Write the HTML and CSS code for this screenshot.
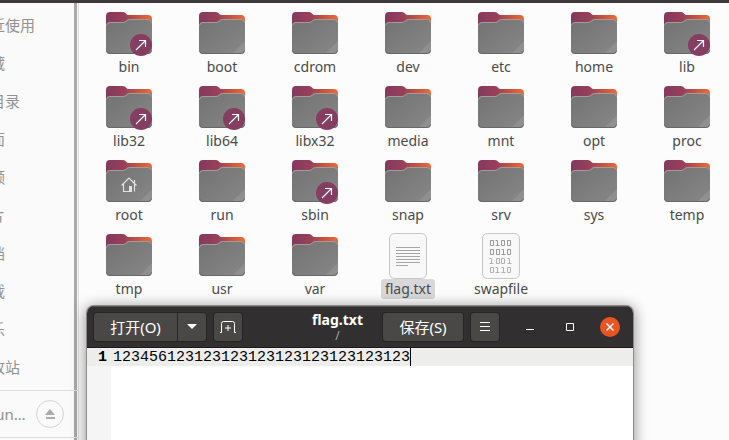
FILE: index.html
```html
<!DOCTYPE html>
<html lang="zh-CN">
<head>
<meta charset="utf-8">
<meta name="viewport" content="width=device-width, initial-scale=1">
<title>flag.txt</title>
<link rel="stylesheet" href="styles.css">
</head>
<body>
<svg class="defs" aria-hidden="true">
  <defs>
    <linearGradient id="back" x1="0" y1="0" x2="1" y2="0">
      <stop offset="0" stop-color="#83395f"/>
      <stop offset=".4" stop-color="#98405a"/>
      <stop offset=".7" stop-color="#c8543f"/>
      <stop offset="1" stop-color="#f06a35"/>
    </linearGradient>
    <linearGradient id="front" x1="0" y1="0" x2="1" y2="1">
      <stop offset="0" stop-color="#727272"/>
      <stop offset="1" stop-color="#878787"/>
    </linearGradient>
    <symbol id="folder" viewBox="0 0 46 48">
      <path d="M0 7q0-4 4-4h13q2 0 3 1.500t3 1.500h19q4 0 4 4v20h-46z" fill="url(#back)"/>
      <path d="M0 17q0-4 4-4h13q2 0 3-1.500t3-1.500h19q4 0 4 4v27q0 4-4 4h-38q-4 0-4-4z" fill="url(#front)"/>
      <path d="M46 32v9q0 4-4 4h-9z" fill="#fff" opacity=".09"/>
      <path d="M.5 16.500q.5-3 3.500-3h13q2 0 3.500-1.500t3-1.500h18.500q3 0 3.500 3" fill="none" stroke="#a19d9c"/>
      <path d="M.5 41.500q.5 3 3.500 3h38q3 0 3.500-3" fill="none" stroke="#686868"/>
    </symbol>
    <symbol id="linked" viewBox="0 0 46 48">
      <use href="#folder" width="46" height="48"/>
      <circle cx="35" cy="36" r="11" fill="#863d62"/>
      <path d="M30 41l9.500-9.500M33 31.500h6.500v6.500" fill="none" stroke="#fff" stroke-width="1.200"/>
    </symbol>
    <symbol id="home" viewBox="0 0 46 48">
      <use href="#folder" width="46" height="48"/>
      <path d="M15.500 28.500l7.500-7.500 7.500 7.500M17.500 27v7.500h6M28.500 27v7.500M28.500 26v-3" fill="none" stroke="#e2e2e2" stroke-width="1.200"/>
      <path d="M23 29h3v6h-3z" fill="#e2e2e2"/>
    </symbol>
    <symbol id="text" viewBox="0 0 46 48">
      <rect x="4.500" y="2.500" width="37" height="45" rx="5" fill="#f8f8f8" stroke="#c6c6c6"/>
      <path d="M11 16.500h24M11 19.500h24M11 22.500h24M11 25.500h24M11 28.500h24M11 31.500h24M11 34.500h12" stroke="#a5a5a5"/>
    </symbol>
    <symbol id="binary" viewBox="0 0 46 48">
      <rect x="4.500" y="2.500" width="37" height="45" rx="5" fill="#f8f8f8" stroke="#c6c6c6"/>
      <g fill="none" stroke="#999">
        <path d="M12.500 9.500h3v5h-3zM17.500 9.500h2v5m-2 0h4M23.500 9.500h3v5h-3zM29.500 9.500h3v5h-3z"/>
        <path d="M12.500 18.500h3v5h-3zM18.500 18.500h3v5h-3zM23.500 18.500h2v5m-2 0h4M29.500 18.500h3v5h-3z"/>
        <path stroke="#b2b2b2" d="M11.500 27.500h2v5m-2 0h4M18.500 27.500h3v5h-3zM23.500 27.500h3v5h-3zM29.500 27.500h2v5m-2 0h4"/>
        <path stroke="#b2b2b2" d="M12.500 36.500h3v5h-3zM17.500 36.500h2v5m-2 0h4M23.500 36.500h2v5m-2 0h4M29.500 36.500h3v5h-3z"/>
      </g>
    </symbol>
  </defs>
</svg>

<div class="files">
  <nav class="sidebar">
    <ul class="places">
      <li><a href="#">最近使用</a></li>
      <li><a href="#">收藏</a></li>
      <li><a href="#">主目录</a></li>
      <li><a href="#">桌面</a></li>
      <li><a href="#">视频</a></li>
      <li><a href="#">图片</a></li>
      <li><a href="#">文档</a></li>
      <li><a href="#">下载</a></li>
      <li><a href="#">音乐</a></li>
      <li><a href="#">回收站</a></li>
    </ul>
    <div class="device">
      <a href="#">Ubun…</a>
      <button class="eject" aria-label="弹出"><svg width="12" height="12"><path d="M6 1l5 6h-10zM2 9h9v2h-9z" fill="#aaa"/></svg></button>
    </div>
  </nav>
  <main class="grid">
    <a class="item" href="#"><svg><use href="#linked"/></svg><span>bin</span></a>
    <a class="item" href="#"><svg><use href="#folder"/></svg><span>boot</span></a>
    <a class="item" href="#"><svg><use href="#folder"/></svg><span>cdrom</span></a>
    <a class="item" href="#"><svg><use href="#folder"/></svg><span>dev</span></a>
    <a class="item" href="#"><svg><use href="#folder"/></svg><span>etc</span></a>
    <a class="item" href="#"><svg><use href="#folder"/></svg><span>home</span></a>
    <a class="item" href="#"><svg><use href="#linked"/></svg><span>lib</span></a>
    <a class="item" href="#"><svg><use href="#linked"/></svg><span>lib32</span></a>
    <a class="item" href="#"><svg><use href="#linked"/></svg><span>lib64</span></a>
    <a class="item" href="#"><svg><use href="#linked"/></svg><span>libx32</span></a>
    <a class="item" href="#"><svg><use href="#folder"/></svg><span>media</span></a>
    <a class="item" href="#"><svg><use href="#folder"/></svg><span>mnt</span></a>
    <a class="item" href="#"><svg><use href="#folder"/></svg><span>opt</span></a>
    <a class="item" href="#"><svg><use href="#folder"/></svg><span>proc</span></a>
    <a class="item" href="#"><svg><use href="#home"/></svg><span>root</span></a>
    <a class="item" href="#"><svg><use href="#folder"/></svg><span>run</span></a>
    <a class="item" href="#"><svg><use href="#linked"/></svg><span>sbin</span></a>
    <a class="item" href="#"><svg><use href="#folder"/></svg><span>snap</span></a>
    <a class="item" href="#"><svg><use href="#folder"/></svg><span>srv</span></a>
    <a class="item" href="#"><svg><use href="#folder"/></svg><span>sys</span></a>
    <a class="item" href="#"><svg><use href="#folder"/></svg><span>temp</span></a>
    <a class="item" href="#"><svg><use href="#folder"/></svg><span>tmp</span></a>
    <a class="item" href="#"><svg><use href="#folder"/></svg><span>usr</span></a>
    <a class="item" href="#"><svg><use href="#folder"/></svg><span>var</span></a>
    <a class="item selected" href="#"><svg><use href="#text"/></svg><span>flag.txt</span></a>
    <a class="item" href="#"><svg><use href="#binary"/></svg><span>swapfile</span></a>
  </main>
</div>

<section class="editor">
  <header class="bar">
    <div class="side">
      <div class="split">
        <button class="btn open">打开(O)</button>
        <button class="btn icon" aria-label="最近的文件"><svg width="10" height="6"><path d="M0 0h10l-5 5z" fill="#fff"/></svg></button>
      </div>
      <button class="btn icon" aria-label="新建"><svg width="16" height="12"><path d="M0 11.500h1.500v-9q0-2 2-2h9q2 0 2 2v9h1.500M8 4v6M5 7h6" fill="none" stroke="#fff"/></svg></button>
    </div>
    <h1 class="title">flag.txt<small>/</small></h1>
    <div class="side">
      <button class="btn save">保存(S)</button>
      <button class="btn icon" aria-label="菜单"><svg width="10" height="10"><path d="M0 .5h10M0 4.500h10M0 8.500h10" stroke="#fff"/></svg></button>
      <div class="controls">
        <button class="ctl" aria-label="最小化"><svg width="20" height="20"><path d="M6 12.500h8" stroke="#fff"/></svg></button>
        <button class="ctl" aria-label="最大化"><svg width="20" height="20"><path d="M6.500 6.500h7v7h-7z" fill="none" stroke="#fff"/></svg></button>
        <button class="ctl close" aria-label="关闭"><svg width="20" height="20"><path d="M6.500 6.500l7 7M13.500 6.500l-7 7" stroke="#fff" stroke-width="1.500"/></svg></button>
      </div>
    </div>
  </header>
  <div class="doc">
    <div class="line"><b class="num">1</b><code class="code">123456123123123123123123123123123</code></div>
  </div>
</section>
</body>
</html>
```

FILE: styles.css
```css
* { box-sizing: border-box; }

body {
  margin: 0;
  height: 100vh;
  overflow: hidden;
  position: relative;
  background: #fcfcfc;
  color: #4a4a4a;
  font: 15px/20px "Noto Sans", "Noto Sans CJK SC", sans-serif;
}

a { color: inherit; text-decoration: none; }
button { font: inherit; color: inherit; padding: 0; border: 0; cursor: pointer; }
svg { display: block; }
.defs { position: absolute; width: 0; height: 0; }

.files {
  display: flex;
  height: 100%;
  border-top: 3px solid #3c3a3b;
}

.sidebar {
  flex: none;
  width: 79px;
  overflow: hidden;
  background: linear-gradient(to left, #dedede 1px, #fafafa 1px 2px, #a9a9a9 2px 5px, #fafafa 5px);
  color: #929292;
}

.places {
  list-style: none;
  margin: 0 0 0 -25px;
  padding: 3px 0 0;
}

.places a { display: block; line-height: 38px; white-space: nowrap; }

.device {
  display: flex;
  align-items: center;
  justify-content: space-between;
  height: 48px;
  margin: 4px 0 0 -25px;
  padding-right: 15px;
  border: solid #dedede;
  border-width: 1px 0;
}

.eject {
  display: grid;
  place-items: center;
  width: 28px;
  height: 28px;
  border: 1px solid #d6d6d6;
  border-radius: 50%;
  background: none;
}

.grid {
  flex: 1;
  display: grid;
  grid-template-columns: repeat(auto-fill, 78px);
  align-content: start;
  gap: 6px 15px;
  padding: 6px 0 0 11px;
}

.item { display: flex; flex-direction: column; align-items: center; font-size: 14px; }
.item svg { width: 46px; height: 48px; }
.item span { padding: 0 4px; border-radius: 3px; }
.selected span { background: #d8d8d8; }

/* text editor window floating over the file manager */
.editor {
  position: absolute;
  top: 306px;
  right: 96px;
  bottom: -20px;
  left: 87px;
  display: flex;
  flex-direction: column;
  overflow: hidden;
  border-radius: 7px 7px 0 0;
  background: #fff;
  box-shadow: 0 0 0 1px #8b8b8b, 0 2px 14px 2px rgba(0, 0, 0, .4);
}

.bar {
  display: grid;
  grid-template-columns: auto 1fr auto;
  height: 42px;
  padding: 0 13px 0 7px;
  border-top: 1px solid #555253;
  border-bottom: 1px solid #1f181d;
  background: #322f30;
  color: #fff;
}

.side { display: flex; align-items: center; gap: 8px; }
.split { display: flex; gap: 1px; }

.btn {
  display: grid;
  place-items: center;
  height: 28px;
  border-radius: 3px;
  background: #4a4846;
  box-shadow: 0 0 0 1px #272526;
}

.icon { width: 28px; }
.open { width: 83px; }
.save { width: 80px; }
.split .open { border-radius: 3px 0 0 3px; }
.split .icon { border-radius: 0 3px 3px 0; }

.title {
  justify-self: end;
  margin: 0 20px 0 0;
  padding-top: 5px;
  font-size: 14px;
  line-height: 16px;
  text-align: center;
}

.title small { display: block; color: #aaa; font-size: 12px; font-weight: 400; }

.controls { display: flex; gap: 20px; padding-left: 13px; }
.ctl { width: 20px; height: 20px; border-radius: 50%; background: none; }
.close { background: #e95420; }

.doc { flex: 1; background: linear-gradient(to right, #f5f5f5 24px, #fff 24px); }

.line {
  display: flex;
  height: 18px;
  background: #ededec;
  color: #000;
  font: 15px/20px "Liberation Mono", monospace;
}

.num { width: 24px; padding-right: 4px; text-align: right; }
.code { padding-left: 2px; font: inherit; border-right: 1px solid #000; }
```
